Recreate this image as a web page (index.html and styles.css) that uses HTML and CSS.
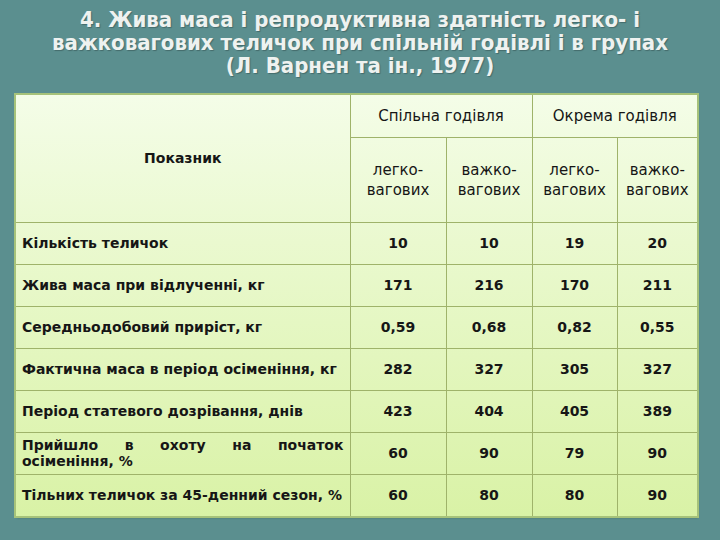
FILE: index.html
```html
<!DOCTYPE html>
<html lang="uk">
<head>
<meta charset="utf-8">
<link rel="stylesheet" href="styles.css">
</head>
<body>
<h1 class="title">4. Жива маса і репродуктивна здатність легко- і<br>важковагових теличок при спільній годівлі і в групах<br>(Л. Варнен та ін., 1977)</h1>
<table class="data">
<colgroup>
<col class="c0"><col class="c1"><col class="c2"><col class="c3"><col class="c4">
</colgroup>
<thead>
<tr class="h1">
<th rowspan="2" class="lbl">Показник</th>
<th colspan="2" class="grp">Спільна годівля</th>
<th colspan="2" class="grp">Окрема годівля</th>
</tr>
<tr class="h2">
<th class="sub">легко-<br>вагових</th>
<th class="sub">важко-<br>вагових</th>
<th class="sub">легко-<br>вагових</th>
<th class="sub">важко-<br>вагових</th>
</tr>
</thead>
<tbody>
<tr><td class="name">Кількість теличок</td><td>10</td><td>10</td><td>19</td><td>20</td></tr>
<tr><td class="name">Жива маса при відлученні, кг</td><td>171</td><td>216</td><td>170</td><td>211</td></tr>
<tr><td class="name">Середньодобовий приріст, кг</td><td>0,59</td><td>0,68</td><td>0,82</td><td>0,55</td></tr>
<tr><td class="name">Фактична маса в період осіменіння, кг</td><td>282</td><td>327</td><td>305</td><td>327</td></tr>
<tr><td class="name">Період статевого дозрівання, днів</td><td>423</td><td>404</td><td>405</td><td>389</td></tr>
<tr><td class="name just">Прийшло в охоту на початок осіменіння, %</td><td>60</td><td>90</td><td>79</td><td>90</td></tr>
<tr><td class="name">Тільних теличок за 45-денний сезон, %</td><td>60</td><td>80</td><td>80</td><td>90</td></tr>
</tbody>
</table>
</body>
</html>
```
FILE: styles.css
```css
html, body {
  margin: 0;
  padding: 0;
}
body {
  background: #5b8f8f;
  width: 720px;
  height: 540px;
  overflow: hidden;
  font-family: "DejaVu Sans", Verdana, sans-serif;
}
.title {
  margin: 0;
  padding: 8px 0 0 0;
  height: 89px;
  box-sizing: border-box;
  text-align: center;
  font-family: "DejaVu Sans Condensed", "DejaVu Sans", sans-serif;
  font-weight: bold;
  font-size: 22px;
  line-height: 23px;
  color: #eef2f0;
  text-shadow: 1px 1px 1px rgba(0,0,0,0.25);
}
.data {
  margin: 6px 0 0 16px;
  width: 681px;
  border-collapse: collapse;
  table-layout: fixed;
  background: linear-gradient(to bottom, #f4fde8 0%, #eaf9cf 35%, #d9f2a6 100%);
  outline: 2px solid #a6c27a;
  box-shadow: 1px 2px 2px rgba(40,70,40,0.35);
  color: #161616;
  font-size: 14px;
}
.c0 { width: 334px; }
.c1 { width: 96px; }
.c2 { width: 86px; }
.c3 { width: 85px; }
.c4 { width: 80px; }
.data th, .data td {
  border: 1px solid #9fb36a;
  padding: 0;
  text-align: center;
  vertical-align: middle;
}
.data tr:first-child th { border-top: none; }
.data th:first-child, .data td:first-child { border-left: none; }
.data th:last-child, .data td:last-child { border-right: none; }
.data tbody tr:last-child td { border-bottom: none; }
.h1 { height: 42px; }
.h2 { height: 85px; }
.lbl { font-weight: bold; }
.grp, .sub {
  font-weight: normal;
  font-size: 15px;
  line-height: 20px;
}
.data tbody tr { height: 42px; }
.data td { font-weight: bold; }
.data td.name {
  text-align: left;
  padding: 0 6px 0 6px;
  line-height: 16px;
}
.data td.just {
  text-align: justify;
  text-align-last: left;
}
```
